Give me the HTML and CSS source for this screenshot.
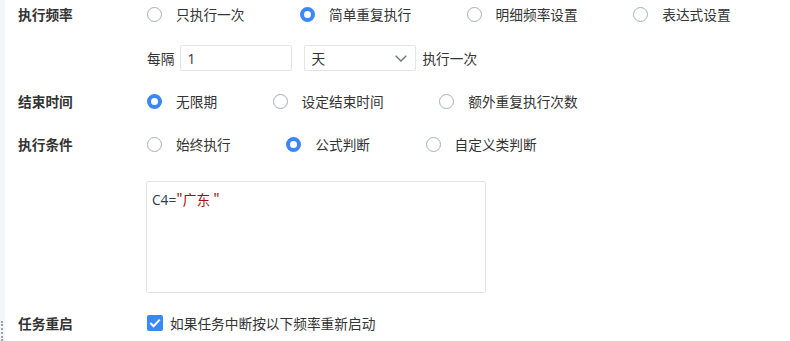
FILE: index.html
```html
<!DOCTYPE html>
<html lang="zh-CN">
<head>
<meta charset="utf-8">
<title>任务设置</title>
<link rel="stylesheet" href="styles.css">
</head>
<body>
<div class="page">
  <div class="strip"><div class="grip"></div></div>
  <div class="main">
    <div class="row r1">
      <div class="label">执行频率</div>
      <div class="options">
        <span class="opt"><span class="radio"></span><span class="txt">只执行一次</span></span>
        <span class="opt"><span class="radio on"></span><span class="txt">简单重复执行</span></span>
        <span class="opt"><span class="radio"></span><span class="txt">明细频率设置</span></span>
        <span class="opt"><span class="radio"></span><span class="txt">表达式设置</span></span>
      </div>
    </div>
    <div class="row r2">
      <div class="label"></div>
      <div class="interval">
        <span class="txt">每隔</span>
        <div class="input">1</div>
        <div class="select"><span>天</span>
          <svg class="chev" width="12" height="7" viewBox="0 0 12 7"><path d="M0.7 0.7 L6 6 L11.3 0.7" fill="none" stroke="#6b7280" stroke-width="1.3"/></svg>
        </div>
        <span class="txt">执行一次</span>
      </div>
    </div>
    <div class="row r3">
      <div class="label">结束时间</div>
      <div class="options">
        <span class="opt"><span class="radio on"></span><span class="txt">无限期</span></span>
        <span class="opt"><span class="radio"></span><span class="txt">设定结束时间</span></span>
        <span class="opt"><span class="radio"></span><span class="txt">额外重复执行次数</span></span>
      </div>
    </div>
    <div class="row r4">
      <div class="label">执行条件</div>
      <div class="options">
        <span class="opt"><span class="radio"></span><span class="txt">始终执行</span></span>
        <span class="opt"><span class="radio on"></span><span class="txt">公式判断</span></span>
        <span class="opt"><span class="radio"></span><span class="txt">自定义类判断</span></span>
      </div>
    </div>
    <div class="row r5">
      <div class="label"></div>
      <div class="editor"><span class="code">C4=</span><span class="str">"广东 "</span></div>
    </div>
    <div class="row r6">
      <div class="label">任务重启</div>
      <div class="options">
        <span class="opt"><span class="check"><svg width="12" height="10" viewBox="0 0 12 10"><path d="M1.3 5 L4.6 8.2 L10.7 1.6" fill="none" stroke="#fff" stroke-width="2"/></svg></span><span class="txt">如果任务中断按以下频率重新启动</span></span>
      </div>
    </div>
  </div>
</div>
</body>
</html>
```

FILE: styles.css
```css
* { box-sizing: border-box; }
html, body { margin: 0; padding: 0; background: #fff; }
body {
  font-family: "Noto Sans CJK SC", "Noto Sans", sans-serif;
  font-size: 13.7px;
  color: #333;
  width: 790px;
  height: 341px;
  overflow: hidden;
}
.page { display: flex; height: 341px; }
.strip {
  width: 5px;
  background: #f4f5f7;
  display: flex;
  flex-direction: column;
  justify-content: flex-end;
}
.grip {
  width: 2px;
  height: 20px;
  margin-left: 1px;
  border-left: 2px dotted #9aa0a8;
}
.main { flex: 1; padding-left: 13px; }
.row { display: flex; align-items: center; }
.label {
  width: 129px;
  flex: none;
  font-weight: bold;
  color: #333;
}
.r1 { height: 28px; }
.r2 { height: 26px; margin-top: 17px; }
.r3 { height: 28px; margin-top: 16px; }
.r4 { height: 28px; margin-top: 15px; }
.r5 { margin-top: 23px; align-items: flex-start; }
.r6 { height: 28px; margin-top: 16px; }
.options { display: flex; align-items: center; }
.opt { display: flex; align-items: center; margin-right: 55.5px; }
.radio {
  width: 15px;
  height: 15px;
  border: 1px solid #a9aeb7;
  border-radius: 50%;
  background: #fff;
  margin-right: 14px;
  flex: none;
}
.radio.on { border: 4.5px solid #3b87f5; }
.txt { white-space: nowrap; color: #333; }
.interval { display: flex; align-items: center; }
.input {
  width: 112px;
  height: 26px;
  border: 1px solid #e2e4e8;
  border-radius: 2px;
  margin-left: 6px;
  padding-left: 6px;
  display: flex;
  align-items: center;
  font-family: "Open Sans", "Noto Sans CJK SC", sans-serif;
}
.select {
  width: 112px;
  height: 26px;
  border: 1px solid #e2e4e8;
  border-radius: 2px;
  margin-left: 12px;
  margin-right: 6px;
  padding: 0 8px 0 6px;
  display: flex;
  align-items: center;
  justify-content: space-between;
}
.chev { display: block; }
.editor {
  width: 340px;
  height: 112px;
  border: 1px solid #e2e4e8;
  border-radius: 2px;
  margin-left: -1px;
  padding: 7px 0 0 5px;
  font-size: 13.7px;
  line-height: 20px;
  white-space: pre;
}
.code { color: #2c3a52; font-family: "Open Sans", "Noto Sans CJK SC", sans-serif; }
.str { color: #a11111; }
.check {
  width: 16px;
  height: 16px;
  background: #3b87f5;
  border-radius: 2px;
  margin-right: 7px;
  display: flex;
  align-items: center;
  justify-content: center;
  flex: none;
}
.check svg { display: block; }
```
